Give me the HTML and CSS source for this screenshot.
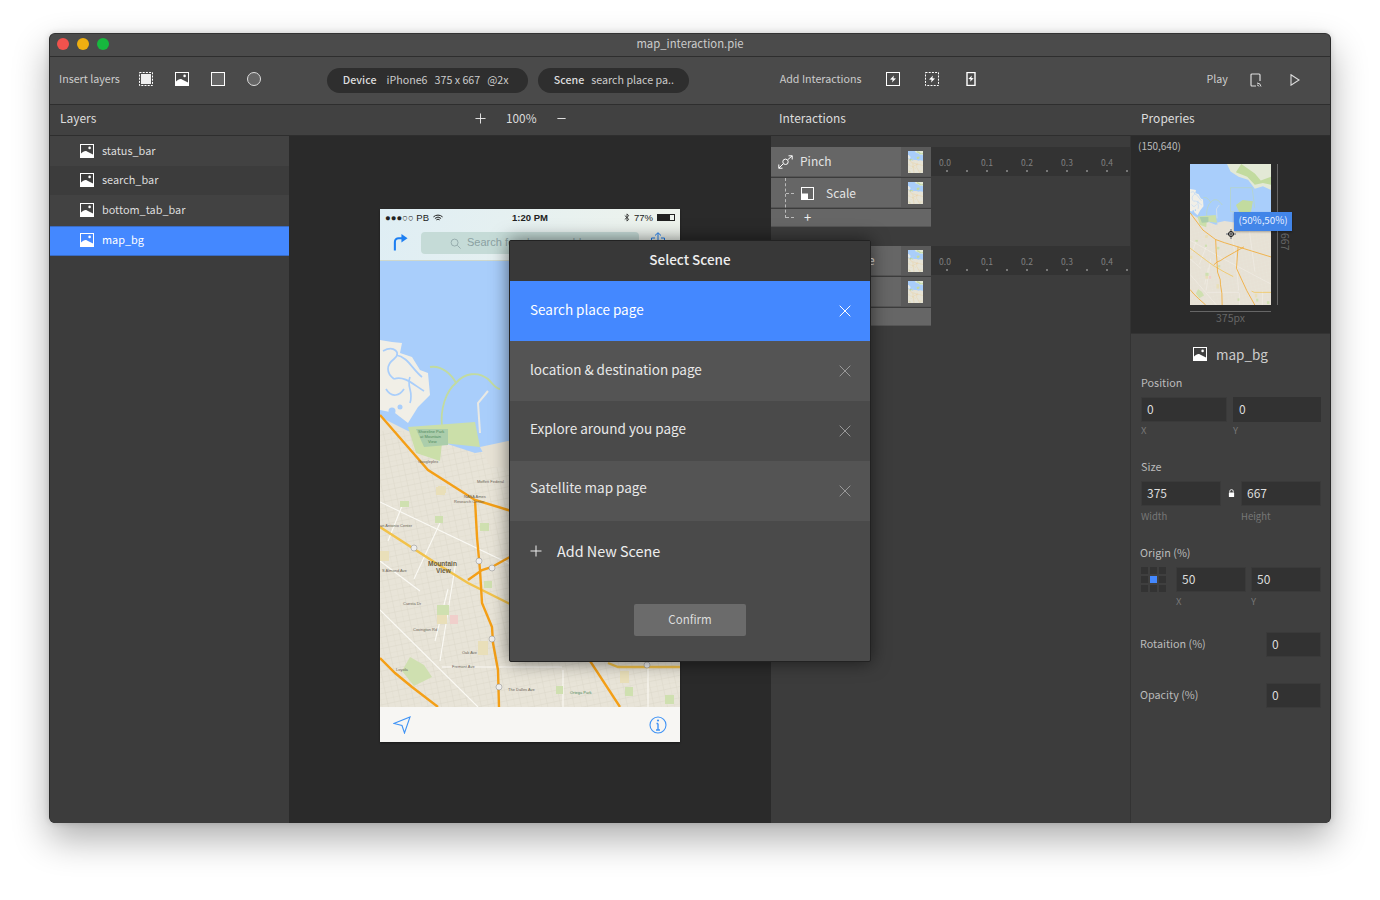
FILE: index.html
```html
<!doctype html>
<html>
<head>
  <meta charset="utf-8"/>
  <title>map_interaction.pie</title>
  <link rel="stylesheet" href="styles.css">
</head>
<body>
  <!-- shared drawings -->
  <svg class="svg-defs">
    <defs>
      <pattern id="streets" width="13" height="11" patternUnits="userSpaceOnUse" patternTransform="rotate(-12)">
        <path d="M0 0H13M0 0V11M6.500 0V11M0 5.500H13" stroke="#dbd6c8" stroke-width=".5" fill="none"/>
      </pattern>
      <symbol id="img" viewBox="0 0 14 14">
        <rect x=".5" y=".5" width="13" height="13" fill="none" stroke="#fff"/>
        <circle cx="9.600" cy="3.900" r="1.300" fill="#fff"/>
        <path d="M1 9.600C3 7.600 5 6.600 7 7.400L13 10.600V13H1z" fill="#fff"/>
      </symbol>
      <symbol id="spark" viewBox="0 0 8 8">
        <path d="M5 .5L4.400 3.200 7 3.600 3 7.500 3.600 4.800 1 4.400z" fill="#fff"/>
      </symbol>
      <symbol id="close" viewBox="0 0 12 12">
        <path d="M.7.7L11.300 11.300M11.300.7L.7 11.300" stroke="currentColor" fill="none"/>
      </symbol>
      <symbol id="map" viewBox="0 0 300 446" preserveAspectRatio="none">
        <rect width="300" height="446" fill="#e8e4d8"/>
        <rect y="170" width="300" height="276" fill="url(#streets)"/>
        <path d="M0 0H300V196L240 190 200 196 130 186 95 192 28 170 0 156z" fill="#a9cefb"/>
        <path d="M137 0H300V82L270 70 240 78 215 50 180 40 150 24z" fill="#e3e9d6"/>
        <path d="M190 0L240 30 262 52 300 40V66L270 60 240 66 212 40 170 26z" fill="#c2db9f"/>
        <path d="M170 130L195 114 233 118 226 150 190 165z" fill="#c2db9f"/>
        <path d="M150 75V150L200 158M150 75H230L240 140" stroke="#c2db9f" fill="none" stroke-width="1.500"/>
        <path d="M0 79L12 81 22 82 20 92 32 96 40 109 48 112 50 134 38 146 28 162 15 152 0 149z" fill="#f1efe7"/>
        <path d="M3 90C14 84 22 92 14 98S6 112 14 118M16 94C28 96 32 108 42 116M14 118C24 114 34 124 44 130M6 128C12 138 20 134 24 128M30 116C26 126 34 130 30 142" stroke="#a9cefb" stroke-width="1.700" fill="none"/>
        <circle cx="12" cy="150" r="3.500" fill="#a9cefb"/><circle cx="20" cy="146" r="2.500" fill="#a9cefb"/>
        <path d="M50 106C62 104 72 114 76 122 66 130 60 148 62 166M76 122C84 112 98 110 108 118 114 124 116 128 120 128" stroke="#c2db9f" stroke-width="1.800" fill="none"/>
        <path d="M108 130L98 142 100 172" stroke="#e9e9e4" stroke-width="2" fill="none"/>
        <path d="M28 166L95 161 100 186 62 182 60 200 36 192z" fill="#cbdfa9"/>
        <path d="M36 168H68V184L44 186z" fill="#abcdab"/>
        <path d="M100 186L128 180 200 190 180 215 110 205z" fill="#e7e2d5"/>
        <path d="M0 241L128 302 300 380M60 262L34 318M68 328L55 380M0 349L98 446M62 406H182M183 409V446M268 402V446M150 200L170 300 180 400M220 210L240 340M24 240L8 280M76 300L60 400M0 300L40 330" stroke="#fbfaf5" stroke-width="1.100" fill="none"/>
        <g fill="#cfe0b0">
          <rect x="20" y="240" width="9" height="6"/><rect x="55" y="255" width="8" height="7"/>
          <rect x="100" y="262" width="9" height="8"/><rect x="104" y="320" width="8" height="7"/>
          <rect x="57" y="344" width="12" height="10"/><rect x="176" y="425" width="7" height="8"/>
          <rect x="245" y="426" width="8" height="9"/><rect x="285" y="434" width="9" height="9"/>
          <path d="M22 410L30 396 44 404 52 416 34 425z"/>
        </g>
        <g fill="#e9dfb9">
          <rect x="58" y="225" width="8" height="7"/><rect x="0" y="290" width="9" height="10"/>
          <rect x="57" y="354" width="10" height="9"/><rect x="98" y="380" width="10" height="14"/>
          <rect x="240" y="410" width="9" height="12"/><rect x="56" y="226" width="9" height="8"/>
        </g>
        <rect x="70" y="354" width="8" height="9" fill="#f0cfcb"/>
        <path d="M0 266L62 306 88 322 128 342 160 356M228 402L238 406H300" stroke="#f2c24a" stroke-width="2.400" fill="none"/>
        <path d="M0 154L48 209 95 239 128 249 178 262 300 294M95 239L97 276 100 309 102 342 112 366 113 382 118 409 119 446M88 319L102 309 112 306 128 297 200 262M0 397L15 412 32 426 58 446M178 262L172 330 210 400 240 446" stroke="#f49f16" stroke-width="2.400" fill="none"/>
      </symbol>
    </defs>
  </svg>

  <div class="window">
    <div class="titlebar">
      <div class="lights"><i class="red"></i><i class="yellow"></i><i class="green"></i></div>
      <div class="title">map_interaction.pie</div>
    </div>

    <div class="toolbar">
      <span class="tool-label">Insert layers</span>
      <div class="tool-icons insert">
        <svg viewBox="0 0 14 14"><rect x="2" y="2" width="10" height="10" fill="#eee"/><rect x=".5" y=".5" width="13" height="13" fill="none" stroke="#fff" stroke-dasharray="2 1.200"/></svg>
        <svg viewBox="0 0 14 14"><use href="#img"/></svg>
        <svg viewBox="0 0 14 14"><rect x=".5" y=".5" width="13" height="13" fill="#666" stroke="#fff"/></svg>
        <svg viewBox="0 0 14 14"><circle cx="7" cy="7" r="6.500" fill="#666" stroke="#ddd"/></svg>
      </div>
      <div class="pill device"><b>Device</b><span>iPhone6</span><span>375 x 667</span><span>@2x</span></div>
      <div class="pill scene"><b>Scene</b><span>search place pa..</span></div>
      <span class="tool-label add-label">Add Interactions</span>
      <div class="tool-icons adds">
        <svg viewBox="0 0 14 14"><rect x=".5" y=".5" width="13" height="13" fill="none" stroke="#fff"/><use href="#spark" x="3" y="3" width="8" height="8"/></svg>
        <svg viewBox="0 0 14 14"><rect x=".5" y=".5" width="13" height="13" fill="none" stroke="#fff" stroke-dasharray="2 1.200"/><use href="#spark" x="3" y="3" width="8" height="8"/></svg>
        <svg viewBox="0 0 14 14"><rect x="3" y=".5" width="8" height="13" fill="none" stroke="#fff" stroke-width="1.400"/><use href="#spark" x="3.400" y="3" width="7.200" height="7.200"/></svg>
      </div>
      <span class="tool-label play-label">Play</span>
      <svg class="cast" viewBox="0 0 14 14"><path d="M7 13H3a1 1 0 0 1-1-1V2a1 1 0 0 1 1-1h7a1 1 0 0 1 1 1v6" fill="none" stroke="#ddd" stroke-width="1.200"/><path d="M8 10a4 4 0 0 1 4 3.500M8 12a2 2 0 0 1 2 1.500" fill="none" stroke="#ddd"/></svg>
      <svg class="play" viewBox="0 0 10 12"><path d="M1 .8L9 6 1 11.200z" fill="none" stroke="#ddd" stroke-width="1.100"/></svg>
    </div>

    <div class="columns heads">
      <div class="head">Layers</div>
      <div class="head zoom-head">
        <svg viewBox="0 0 12 12"><path d="M6 .5V11.500M.5 6H11.500" stroke="#eee" fill="none"/></svg>
        <span>100%</span>
        <svg viewBox="0 0 12 12"><path d="M1.500 6H10.500" stroke="#eee" fill="none"/></svg>
      </div>
      <div class="head">Interactions</div>
      <div class="head">Properies</div>
    </div>

    <div class="columns panels">
      <div class="layers">
        <div class="layer"><svg><use href="#img" width="14" height="14"/></svg>status_bar</div>
        <div class="layer alt"><svg><use href="#img" width="14" height="14"/></svg>search_bar</div>
        <div class="layer tall"><svg><use href="#img" width="14" height="14"/></svg>bottom_tab_bar</div>
        <div class="layer active"><svg><use href="#img" width="14" height="14"/></svg>map_bg</div>
      </div>

      <div class="canvas">
        <div class="phone">
          <div class="phone-top">
            <div class="status">
              <span class="carrier">●●●○○ PB
                <svg viewBox="0 0 12 9"><path d="M.5 3.200a8 8 0 0 1 11 0M2.300 5a5.500 5.500 0 0 1 7.400 0M4 6.800a3 3 0 0 1 4 0" fill="none" stroke="#222" stroke-width="1.200"/></svg>
              </span>
              <span class="clock">1:20 PM</span>
              <span class="battery">
                <svg class="bt" viewBox="0 0 6 10"><path d="M.5 2.800L5 7 3 9V1L5 3 .5 7.200" fill="none" stroke="#222" stroke-width=".9"/></svg>
                77%
                <i class="batt"><i></i></i>
              </span>
            </div>
            <div class="searchbar">
              <svg class="turn" viewBox="0 0 16 18"><path d="M2 18V9a4 4 0 0 1 4-4h4" fill="none" stroke="#1d7ff2" stroke-width="2.200"/><path d="M9 .5L15.500 5 9 9.500z" fill="#1d7ff2"/></svg>
              <div class="searchfield">
                <svg viewBox="0 0 12 12"><circle cx="5" cy="5" r="3.800" fill="none" stroke="#93a9aa"/><path d="M8 8L11.500 11.500" stroke="#93a9aa"/></svg>
                Search for place or address
              </div>
              <svg class="share" viewBox="0 0 16 18"><path d="M5 6H1.500V17H14.500V6H11M8 11V1M5 3.500L8 .7 11 3.500" fill="none" stroke="#1d7ff2"/></svg>
            </div>
          </div>
          <svg class="phone-map" viewBox="0 0 300 446">
            <use href="#map" width="300" height="446"/>
            <g>
              <text x="38" y="172" class="tiny green">Shoreline Park</text>
              <text x="40" y="177" class="tiny green">at Mountain</text>
              <text x="48" y="182" class="tiny green">View</text>
              <text x="38" y="202" class="tiny">Googleplex</text>
              <text x="97" y="222" class="tiny">Moffett Federal</text>
              <text x="84" y="237" class="tiny">NASA Ames</text>
              <text x="74" y="242" class="tiny">Research Center</text>
              <text x="0" y="266" class="tiny">an Antonio Center</text>
              <text x="48" y="305" class="city">Mountain</text>
              <text x="56" y="312" class="city">View</text>
              <text x="2" y="311" class="tiny">S Almond Ave</text>
              <text x="23" y="344" class="tiny">Cuesta Dr</text>
              <text x="33" y="370" class="tiny">Covington Rd</text>
              <text x="82" y="393" class="tiny">Oak Ave</text>
              <text x="72" y="407" class="tiny">Fremont Ave</text>
              <text x="128" y="430" class="tiny">The Dalles Ave</text>
              <text x="190" y="433" class="tiny green">Ortega Park</text>
              <text x="16" y="410" class="tiny">Loyola</text>
            </g>
            <g fill="#eee" stroke="#888" stroke-width=".5">
              <circle cx="34" cy="287" r="3"/><circle cx="99" cy="300" r="3"/><circle cx="112" cy="307" r="3"/>
              <circle cx="112" cy="378" r="3"/><circle cx="119" cy="426" r="3"/><circle cx="267" cy="404" r="3"/>
            </g>
          </svg>
          <div class="phone-bottom">
            <svg viewBox="0 0 18 18"><path d="M.8 7.500L17 1 11.500 17 9 9.500z" fill="none" stroke="#3f93f5" stroke-width="1.100"/></svg>
            <svg viewBox="0 0 18 18"><circle cx="9" cy="9" r="8" fill="none" stroke="#3f93f5" stroke-width="1.100"/><path d="M9 7.500V14M7 14H11M7.500 7.500H9" stroke="#3f93f5" stroke-width="1.400" fill="none"/><circle cx="9" cy="4.500" r="1.100" fill="#3f93f5"/></svg>
          </div>
        </div>
      </div>

      <div class="interactions">
        <div class="ix-group">
          <div class="ix-row main">
            <div class="ix-name">
              <svg class="pinch" viewBox="0 0 15 14"><path d="M.8 13.200L5 9M10 4.500L14.200.8M.8 9.500V13.200H4.500M10.500.8H14.200V4.500" fill="none" stroke="#fff"/><circle cx="7.500" cy="6.800" r="2.700" fill="none" stroke="#fff"/></svg>
              Pinch
            </div>
            <div class="ix-thumb"><svg><use href="#map" width="15" height="22"/></svg></div>
            <div class="timeline"><span>0.0</span><span>0.1</span><span>0.2</span><span>0.3</span><span>0.4</span></div>
          </div>
          <div class="ix-row">
            <div class="ix-name child">
              <svg class="scale" viewBox="0 0 13 13"><rect x=".5" y=".5" width="12" height="12" fill="none" stroke="#fff"/><rect y="6.500" width="7" height="6.500" fill="#fff"/></svg>
              Scale
            </div>
            <div class="ix-thumb"><svg><use href="#map" width="15" height="22"/></svg></div>
          </div>
          <div class="ix-add"><span>+</span></div>
        </div>
        <div class="ix-group second">
          <div class="ix-row main">
            <div class="ix-name offset">Change Scene</div>
            <div class="ix-thumb"><svg><use href="#map" width="15" height="22"/></svg></div>
            <div class="timeline"><span>0.0</span><span>0.1</span><span>0.2</span><span>0.3</span><span>0.4</span></div>
          </div>
          <div class="ix-row">
            <div class="ix-name"></div>
            <div class="ix-thumb"><svg><use href="#map" width="15" height="22"/></svg></div>
          </div>
          <div class="ix-add"></div>
        </div>
      </div>

      <div class="props">
        <div class="preview">
          <span class="coords">(150,640)</span>
          <div class="preview-stage">
            <svg class="mini-map"><use href="#map" width="81" height="141"/></svg>
            <i class="ruler-v"></i>
            <span class="dim-v">667</span>
            <i class="ruler-h"></i>
            <span class="dim-h">375px</span>
            <span class="origin-tip">(50%,50%)</span>
            <svg class="cross" viewBox="0 0 10 10"><path d="M5 0V10M0 5H10" stroke="#fff" stroke-width="2"/><circle cx="5" cy="5" r="2.500" fill="none" stroke="#111"/><path d="M5 0V10M0 5H10" stroke="#111" stroke-width=".8"/></svg>
          </div>
        </div>
        <div class="prop-title"><svg><use href="#img" width="14" height="14"/></svg>map_bg</div>

        <div class="prop-label">Position</div>
        <div class="fields">
          <div class="w86"><div class="field">0</div><div class="caption">X</div></div>
          <div class="w88"><div class="field plain">0</div><div class="caption">Y</div></div>
        </div>

        <div class="prop-label size-label">Size</div>
        <div class="fields size-fields">
          <div class="w80"><div class="field">375</div><div class="caption">Width</div></div>
          <svg class="lock" viewBox="0 0 8 9"><path d="M2 4V2.600a2 2 0 0 1 4 0V4" fill="none" stroke="#fff"/><rect x="1" y="4" width="6" height="5" rx=".6" fill="#fff"/></svg>
          <div class="w80"><div class="field">667</div><div class="caption">Height</div></div>
        </div>

        <div class="prop-label origin-label">Origin (%)</div>
        <div class="fields origin-fields">
          <div class="origin-grid"><i></i><i></i><i></i><i></i><i class="on"></i><i></i><i></i><i></i><i></i></div>
          <div class="w70"><div class="field">50</div><div class="caption">X</div></div>
          <div class="w70"><div class="field">50</div><div class="caption">Y</div></div>
        </div>

        <div class="prop-row rotation"><span>Rotaition (%)</span><div class="field small">0</div></div>
        <div class="prop-row opacity"><span>Opacity (%)</span><div class="field small">0</div></div>
      </div>
    </div>

    <div class="modal">
      <div class="modal-title">Select Scene</div>
      <div class="scene-row active"><span>Search place page</span><svg><use href="#close" width="12" height="12"/></svg></div>
      <div class="scene-row"><span>location &amp; destination page</span><svg><use href="#close" width="12" height="12"/></svg></div>
      <div class="scene-row dark up"><span>Explore around you page</span><svg><use href="#close" width="12" height="12"/></svg></div>
      <div class="scene-row up"><span>Satellite map page</span><svg><use href="#close" width="12" height="12"/></svg></div>
      <div class="add-scene">
        <svg viewBox="0 0 12 12"><path d="M6 .5V11.500M.5 6H11.500" stroke="#eee" fill="none"/></svg>
        Add New Scene
      </div>
      <div class="confirm">Confirm</div>
    </div>
  </div>
</body>
</html>
```

FILE: styles.css
```css
html, body {
  margin: 0;
  height: 100%;
  background: #fff;
  overflow: hidden;
}
body {
  font-family: "Noto Sans CJK SC", "Noto Sans", sans-serif;
  font-size: 12px;
  line-height: 1.2;
  color: #ddd;
}
.svg-defs {
  position: absolute;
  width: 0;
  height: 0;
}
svg {
  display: block;
  flex: none;
}

/* window */
.window {
  position: relative;
  box-sizing: border-box;
  width: 1282px;
  height: 790px;
  margin: 33px 0 0 49px;
  border: 1px solid #2a2a2a;
  border-top-color: #333;
  border-radius: 6px;
  background: #3c3c3c;
  box-shadow: 0 16px 36px rgba(0, 0, 0, .32), 0 0 6px rgba(0, 0, 0, .15);
}
.titlebar {
  position: relative;
  display: flex;
  align-items: center;
  justify-content: center;
  height: 22px;
  border-bottom: 1px solid #2e2e2e;
  border-radius: 5px 5px 0 0;
  background: #4b4b4b;
}
.title {
  padding-bottom: 3px;
  font-size: 11.300px;
  color: #ccc;
}
.lights {
  position: absolute;
  left: 7px;
  top: 4px;
  display: flex;
  gap: 8px;
}
.lights i {
  width: 12px;
  height: 12px;
  border-radius: 50%;
}
.lights .red { background: #f0524d; }
.lights .yellow { background: #efaf10; }
.lights .green { background: #17b83e; }

.toolbar {
  display: flex;
  align-items: center;
  height: 47px;
  padding-left: 9px;
  border-bottom: 1px solid #2e2e2e;
  background: #4a4a4a;
}
.tool-label {
  margin-top: -2px;
  font-size: 10.700px;
  color: #ccc;
}
.tool-icons {
  display: flex;
  margin-top: -3px;
}
.tool-icons svg {
  width: 14px;
  height: 14px;
}
.insert {
  gap: 22px;
  margin-left: 19px;
}
.adds {
  gap: 25px;
  margin-left: 24px;
}
.pill {
  display: flex;
  align-items: center;
  box-sizing: border-box;
  height: 25px;
  padding: 0 0 0 16px;
  border-radius: 13px;
  background: #2e2e2e;
  font-size: 10.700px;
  white-space: nowrap;
  color: #ccc;
}
.pill b {
  font-weight: 500;
  color: #ddd;
  margin-right: 10px;
}
.pill span { margin-right: 7px; }
.device {
  margin-left: 66px;
  width: 201px;
}
.scene {
  margin-left: 10px;
  width: 151px;
}
.scene b { margin-right: 7px; }
.add-label { margin-left: 91px; }
.play-label { margin-left: 229px; }
.cast {
  width: 14px;
  height: 14px;
  margin: -2px 0 0 21px;
}
.play {
  width: 10px;
  height: 12px;
  margin: -2px 0 0 27px;
}

/* four columns */
.columns {
  display: grid;
  grid-template-columns: 239px 482px 360px 199px;
}
.heads {
  height: 30px;
  border-bottom: 1px solid #2e2e2e;
  background: #414141;
}
.head {
  display: flex;
  align-items: center;
  padding: 0 0 3px 10px;
  font-size: 12px;
  color: #ddd;
}
.head:nth-child(3) { padding-left: 8px; }
.zoom-head {
  padding-left: 186px;
  font-size: 11.800px;
}
.zoom-head svg {
  width: 11px;
  height: 11px;
}
.zoom-head span { margin: 0 19px 0 20px; }
.panels {
  height: 687px;
}

/* layers */
.layers {
  background: #3c3c3c;
  border-bottom-left-radius: 5px;
}
.layer {
  display: flex;
  align-items: center;
  height: 30px;
  padding-left: 30px;
  background: #424242;
  font-size: 10.900px;
  color: #ddd;
}
.layer svg {
  width: 14px;
  height: 14px;
  margin-right: 8px;
}
.layer.alt {
  box-sizing: border-box;
  height: 29px;
  padding-bottom: 1px;
  background: #3c3c3c;
}
.layer.tall {
  box-sizing: border-box;
  height: 31px;
  padding-bottom: 2px;
}
.layer.active {
  box-sizing: border-box;
  padding-bottom: 2px;
  background: #4488ff;
  color: #fff;
  border-top: 1px solid #3a6cc4;
  border-bottom: 1px solid #3a6cc4;
}

/* canvas and phone */
.canvas {
  background: #2a2a2a;
  padding: 73px 0 0 91px;
}
.phone {
  width: 300px;
  height: 533px;
  background: #f7f6f3;
  box-shadow: 0 1px 2px rgba(0, 0, 0, .4);
}
.phone-top {
  height: 52px;
  background: linear-gradient(100deg, #dfeef4, #eef3ec);
  border-bottom: 1px solid #cfd8cc;
  box-sizing: border-box;
}
.status {
  display: flex;
  align-items: center;
  height: 18px;
  padding: 0 5px;
  font-family: "Liberation Sans", sans-serif;
  font-size: 9.500px;
  color: #222;
}
.carrier, .battery {
  display: flex;
  flex: 1;
  align-items: center;
  gap: 4px;
}
.battery { justify-content: flex-end; }
.clock { font-weight: bold; }
.carrier svg {
  width: 10px;
  height: 8px;
}
.bt {
  width: 6px;
  height: 9px;
}
.batt {
  display: block;
  width: 18px;
  height: 7px;
  border: 1px solid #222;
  box-sizing: border-box;
}
.batt i {
  display: block;
  width: 12px;
  height: 5px;
  background: #222;
}
.searchbar {
  display: flex;
  align-items: flex-start;
  padding: 5px 0 0 13px;
}
.turn {
  width: 15px;
  height: 18px;
  margin-top: 1px;
}
.searchfield {
  display: flex;
  align-items: center;
  box-sizing: border-box;
  width: 218px;
  height: 22px;
  margin-left: 13px;
  padding-left: 29px;
  border-radius: 4px;
  background: #c5dbd7;
  color: #8ba1a2;
  font-family: "Liberation Sans", sans-serif;
  font-size: 11px;
}
.searchfield svg {
  width: 11px;
  height: 11px;
  margin-right: 6px;
}
.share {
  width: 16px;
  height: 18px;
  margin-left: 11px;
}
.phone-map {
  width: 300px;
  height: 446px;
}
.tiny {
  font-family: "Liberation Sans", sans-serif;
  font-size: 4px;
  fill: #6b6557;
}
.tiny.green { fill: #4f8a5b; }
.city {
  font-family: "Liberation Sans", sans-serif;
  font-size: 6.500px;
  font-weight: bold;
  fill: #6b5f42;
}
.phone-bottom {
  display: flex;
  align-items: center;
  justify-content: space-between;
  height: 35px;
  padding: 0 13px;
}
.phone-bottom svg {
  width: 18px;
  height: 18px;
}

/* interactions */
.interactions {
  padding-top: 11px;
  border-right: 1px solid #333;
  background: #3c3c3c;
}
.ix-group.second { margin-top: 19px; }
.ix-row {
  display: flex;
  height: 30px;
  margin-bottom: 1px;
}
.ix-name {
  position: relative;
  display: flex;
  align-items: center;
  width: 130px;
  padding-left: 7px;
  box-sizing: border-box;
  background: #666;
  border-bottom: 1px solid #555;
  font-size: 12px;
  white-space: nowrap;
  color: #e4e4e4;
}
.ix-name.offset { padding-left: 25px; }
.pinch {
  width: 15px;
  height: 14px;
  margin-right: 7px;
}
.ix-name.child {
  padding: 1px 0 0 30px;
}
.ix-name.child::before {
  content: "";
  position: absolute;
  z-index: 1;
  left: 14px;
  top: 0;
  height: 40px;
  border-left: 1px dashed #bbb;
}
.ix-name.child::after {
  content: "";
  position: absolute;
  left: 15px;
  top: 15px;
  width: 8px;
  border-top: 1px dashed #bbb;
}
.scale {
  width: 13px;
  height: 13px;
  margin-right: 12px;
}
.ix-thumb {
  display: flex;
  align-items: center;
  justify-content: center;
  width: 30px;
  padding-right: 2px;
  background: #5a5a5a;
  border-bottom: 1px solid #555;
  box-sizing: border-box;
}
.ix-thumb svg {
  width: 15px;
  height: 22px;
}
.timeline {
  display: flex;
  flex: 1;
  height: 29px;
  background: #333 radial-gradient(circle, #777 .8px, transparent 1.100px) 6px 18px / 20px 12px repeat-x;
  overflow: hidden;
}
.timeline span {
  flex: none;
  position: relative;
  left: -4px;
  width: 40px;
  margin: 10px 0 0 0;
  font-size: 8.500px;
  text-align: center;
  color: #808080;
}
.timeline span:first-child { left: -6px; }
.ix-add {
  position: relative;
  box-sizing: border-box;
  width: 160px;
  height: 18px;
  background: #666;
  border-bottom: 1px solid #555;
  color: #eee;
  font-size: 13px;
  line-height: 16px;
  padding-left: 33px;
}
.ix-add span::before {
  content: "";
  position: absolute;
  left: 15px;
  top: 8px;
  width: 8px;
  border-top: 1px dashed #bbb;
}

/* properties */
.props {
  background: #3f3f3f;
  border-bottom-right-radius: 5px;
}
.preview {
  height: 197px;
  border-bottom: 1px solid #333;
  background: #2b2b2b;
}
.coords {
  display: block;
  padding: 4px 0 0 7px;
  font-size: 10px;
  color: #bbb;
}
.preview-stage {
  position: relative;
  width: 81px;
  height: 141px;
  margin: 12px 0 0 59px;
}
.mini-map {
  width: 81px;
  height: 141px;
}
.ruler-v {
  position: absolute;
  left: 87px;
  top: 0;
  height: 141px;
  border-left: 1px solid #666;
}
.ruler-h {
  position: absolute;
  left: 0;
  top: 147px;
  width: 81px;
  border-top: 1px solid #666;
}
.dim-v {
  position: absolute;
  left: 86px;
  top: 70px;
  font-size: 10.500px;
  color: #666;
  transform: rotate(90deg);
  transform-origin: 8px 7px;
}
.dim-h {
  position: absolute;
  left: 0;
  top: 148px;
  width: 81px;
  text-align: center;
  font-size: 10.500px;
  color: #666;
}
.origin-tip {
  position: absolute;
  left: 44px;
  top: 48px;
  width: 58px;
  height: 19px;
  line-height: 17px;
  text-align: center;
  background: #4285e8;
  color: #e8f0ff;
  font-size: 9.800px;
  box-shadow: 0 1px 2px rgba(0, 0, 0, .3);
}
.cross {
  position: absolute;
  left: 36px;
  top: 65px;
  width: 10px;
  height: 10px;
}
.prop-title {
  display: flex;
  align-items: center;
  justify-content: center;
  margin-top: 11px;
  height: 18px;
  font-size: 13.500px;
  color: #ccc;
}
.prop-title svg {
  width: 14px;
  height: 14px;
  margin-right: 9px;
}
.prop-label {
  margin: 13px 0 0 10px;
  height: 14px;
  font-size: 10.800px;
  color: #bbb;
}
.fields {
  display: flex;
  align-items: flex-start;
  justify-content: space-between;
  width: 180px;
  margin: 7px 0 0 10px;
}
.field {
  box-sizing: border-box;
  height: 25px;
  padding-left: 5px;
  border: 1px solid #3a3a3a;
  background: #323232;
  font-size: 12px;
  line-height: 22px;
  color: #ddd;
}
.field.plain { border-color: #323232; }
.w86 { width: 86px; }
.w88 { width: 88px; }
.w80 { width: 80px; }
.w70 { width: 70px; }
.caption {
  margin-top: 3px;
  height: 12px;
  font-size: 9.500px;
  color: #777;
}
.size-label { margin-top: 23px; }
.size-fields .caption { margin-top: 5px; }
.lock {
  width: 7px;
  height: 8px;
  margin-top: 8px;
}
.origin-label {
  margin-top: 23px;
  margin-left: 9px;
}
.origin-fields .caption { margin-top: 4px; }
.origin-grid {
  display: grid;
  grid-template-columns: repeat(3, 7px);
  grid-auto-rows: 7px;
  gap: 2px;
}
.origin-grid i { background: #333; }
.origin-grid .on { background: #4488ff; }
.origin-fields .w70:nth-child(2) { margin-left: 10px; }
.origin-fields .w70:nth-child(3) { margin-left: 5px; }
.prop-row {
  display: flex;
  align-items: center;
  justify-content: space-between;
  width: 181px;
  margin-left: 9px;
  font-size: 10.800px;
  color: #bbb;
}
.prop-row span { padding-bottom: 2px; }
.field.small { width: 55px; }
.rotation { margin-top: 24px; }
.opacity { margin-top: 26px; }

/* select scene dialog */
.modal {
  position: absolute;
  left: 459px;
  top: 206px;
  width: 362px;
  height: 422px;
  box-sizing: border-box;
  border: 1px solid #222;
  border-radius: 2px;
  background: #4a4a4a;
  box-shadow: 0 0 18px rgba(0, 0, 0, .55);
}
.modal-title {
  height: 40px;
  background: #383838;
  font-size: 13.500px;
  font-weight: 500;
  line-height: 36px;
  text-align: center;
  color: #eee;
}
.scene-row {
  display: flex;
  align-items: center;
  justify-content: space-between;
  height: 60px;
  padding: 0 19px 0 20px;
  box-sizing: border-box;
  background: #545454;
  font-size: 13.500px;
  color: #e8e8e8;
}
.scene-row span { margin-top: -4px; }
.scene-row.up span { margin-top: -6px; }
.scene-row.up + .scene-row.up span { margin-top: -8px; }
.scene-row svg {
  width: 12px;
  height: 12px;
  color: #999;
}
.scene-row.active {
  background: #4488ff;
  color: #fff;
}
.scene-row.active svg { color: #fff; }
.scene-row.dark { background: #4a4a4a; }
.add-scene {
  display: flex;
  align-items: center;
  margin-top: 21px;
  padding-left: 20px;
  font-size: 14.400px;
  color: #eee;
}
.add-scene svg {
  width: 12px;
  height: 12px;
  margin-right: 15px;
}
.confirm {
  box-sizing: border-box;
  width: 112px;
  height: 32px;
  margin: 45px auto 0;
  border-radius: 2px;
  background: #6b6b6b;
  font-size: 11.500px;
  line-height: 31px;
  text-align: center;
  color: #ddd;
}
```
